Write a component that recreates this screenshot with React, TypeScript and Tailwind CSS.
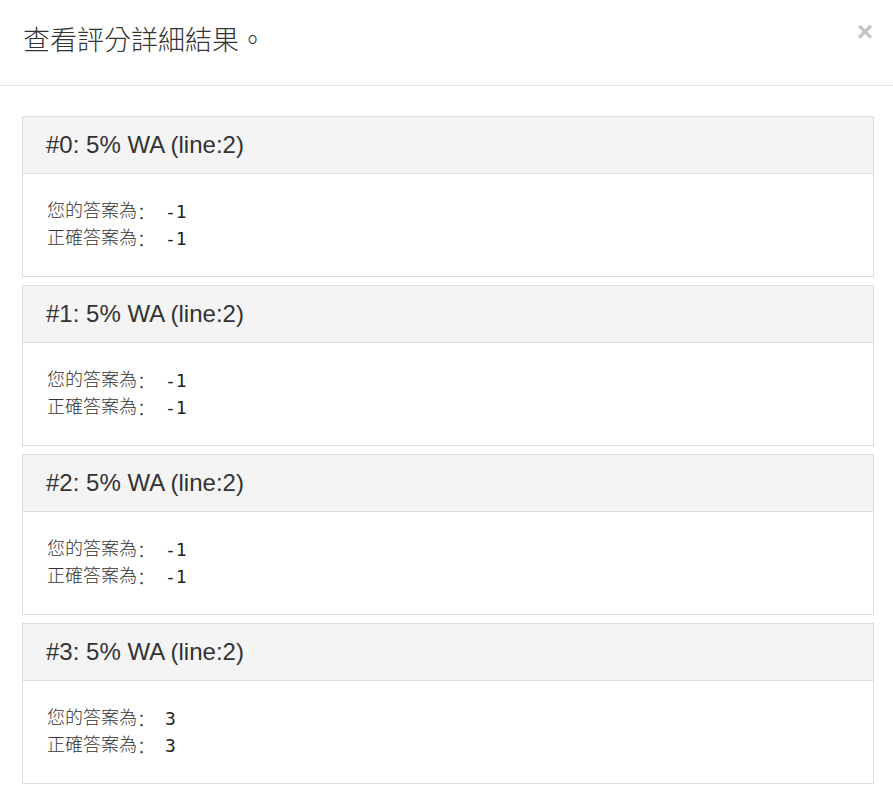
import React from "react";

const items = [
  { id: 0, yours: "-1", correct: "-1" },
  { id: 1, yours: "-1", correct: "-1" },
  { id: 2, yours: "-1", correct: "-1" },
  { id: 3, yours: "3", correct: "3" },
];

const cjk = { fontFamily: '"Liberation Sans", "Noto Sans CJK TC", sans-serif' };
const sc = { fontFamily: '"Noto Sans CJK SC", sans-serif' };
const mono = { fontFamily: '"DejaVu Sans Mono", "Liberation Mono", monospace' };

function Line({ label, value }: { label: string; value: string }) {
  return (
    <div className="flex h-[27px] overflow-visible">
      <span className="block font-light leading-[27px]">{label}</span>
      <span className="block font-light w-[18px] leading-[27px]" style={sc}>：</span>
      <span className="block text-[18px] ml-[10px] leading-[27px] text-[#222]" style={mono}>{value}</span>
    </div>
  );
}

export default function App() {
  return (
    <div className="w-[893px] min-h-[786px] bg-white text-[#333]" style={cjk}>
      <div className="h-[86px] border-b border-[#e5e5e5] flex items-start justify-between pl-[23px] pr-[20px]">
        <h4 className="text-[27px] leading-[30px] mt-[26px] font-light text-[#333]">查看評分詳細結果。</h4>
        <button className="text-[28px] font-bold leading-none mt-[18px] text-[#c4c4c4]" style={{ fontFamily: '"Liberation Sans", sans-serif' }}>×</button>
      </div>
      <div className="pt-[30px] px-[22px] flex flex-col gap-[8px]">
        {items.map((it) => (
          <div key={it.id} className="border border-[#dddddd] w-[852px]">
            <div className="bg-[#f4f4f4] border-b border-[#dddddd] px-[23px] py-[15px] text-[24px] leading-[26px]">
              #{it.id}: 5% WA (line:2)
            </div>
            <div className="px-[24px] py-[24px] text-[18px] leading-[27px]">
              <Line label="您的答案為" value={it.yours} />
              <Line label="正確答案為" value={it.correct} />
            </div>
          </div>
        ))}
      </div>
    </div>
  );
}
